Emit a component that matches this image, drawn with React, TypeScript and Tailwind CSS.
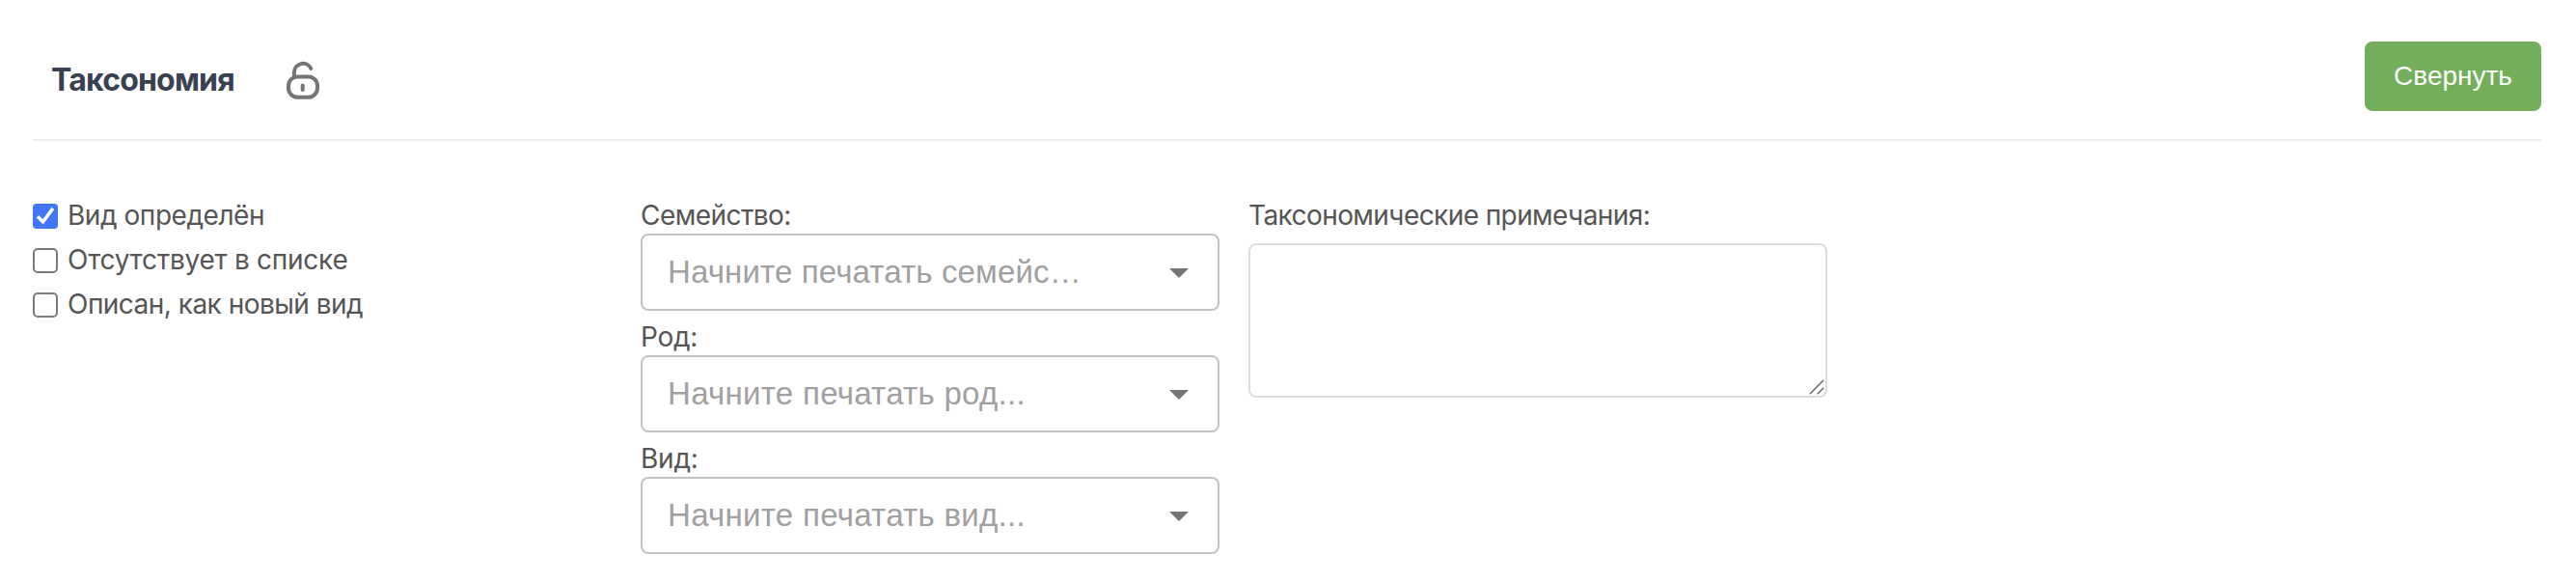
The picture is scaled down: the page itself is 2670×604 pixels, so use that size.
type CheckRowProps = { label: string; checked?: boolean; tracking: string };

function CheckRow({ label, checked = false, tracking }: CheckRowProps) {
  return (
    <label className="flex h-[46px] items-start gap-[10px]">
      {checked ? (
        <span className="mt-[11px] size-[26px] shrink-0 rounded-[4px] bg-[#4175fa]">
          <svg viewBox="0 0 26 26" className="size-[26px]" fill="none" stroke="#fff" strokeWidth="3.6">
            <path d="M5 13.2L10.5 18.8L20.8 5" />
          </svg>
        </span>
      ) : (
        <span className="mt-[11px] size-[26px] shrink-0 rounded-[5px] border-2 border-[#7a7a7a] bg-white" />
      )}
      <span className={`whitespace-nowrap text-[28px] leading-[46px] ${tracking}`}>{label}</span>
    </label>
  );
}

type SelectFieldProps = { label: string; placeholder: string; tracking: string; hintTracking: string };

function SelectField({ label, placeholder, tracking, hintTracking }: SelectFieldProps) {
  return (
    <div className="flex flex-col">
      <span className={`text-[28px] leading-[38px] ${tracking}`}>{label}</span>
      <div className="flex h-20 items-center justify-between rounded-[8px] border-2 border-[#c2c2c2] pr-[30px] pl-[26px]">
        <span className={`whitespace-nowrap font-['Liberation_Sans',sans-serif] text-[33px] leading-[76px] text-[#a0a0a0] ${hintTracking}`}>
          {placeholder}
        </span>
        <svg viewBox="0 0 20 10" className="mt-[2px] h-[10px] w-5 shrink-0" fill="#757575">
          <path d="M0 0H20L10 10Z" />
        </svg>
      </div>
    </div>
  );
}

function UnlockIcon() {
  return (
    <svg viewBox="0 0 36 42" className="h-[42px] w-9" fill="none" stroke="#757575" strokeWidth="4" strokeLinecap="round">
      <rect x="3" y="17.4" width="30" height="21.4" rx="9.5" />
      <path d="M8.9 17.6V12.9A9.2 9.2 0 0 1 26.3 8.9" />
      <path d="M17.7 26.6V31" />
    </svg>
  );
}

export default function App() {
  return (
    <main className="h-[604px] w-[2670px] overflow-hidden bg-white pr-9 pl-[34px] font-[Inter,sans-serif] text-[#555]">
      <header className="flex h-[146px] items-start justify-between border-b-2 border-[#eee] pt-[43px]">
        <div className="flex items-start pl-[19px]">
          <h2 className="mt-5 w-[243px] text-[32px] leading-[40px] font-bold tracking-[-0.8px] text-[#374151]">Таксономия</h2>
          <span className="mt-[19px]">
            <UnlockIcon />
          </span>
        </div>
        <button className="h-[72px] w-[183px] rounded-[8px] bg-[#73ae5b] font-['Liberation_Sans',sans-serif] text-[28px] text-white">
          Свернуть
        </button>
      </header>

      <section className="grid grid-cols-[600px_600px_600px] gap-[30px] pt-[54px]">
        <div className="flex flex-col">
          <CheckRow label="Вид определён" tracking="tracking-[-0.45px]" checked />
          <CheckRow label="Отсутствует в списке" tracking="tracking-[-0.25px]" />
          <CheckRow label="Описан, как новый вид" tracking="tracking-[-0.52px]" />
        </div>

        <div className="flex flex-col gap-2 pt-1">
          <SelectField label="Семейство:" placeholder="Начните печатать семейс…" tracking="tracking-[-0.55px]" hintTracking="tracking-[0.15px]" />
          <SelectField label="Род:" placeholder="Начните печатать род..." tracking="tracking-[-0.3px]" hintTracking="tracking-[0.3px]" />
          <SelectField label="Вид:" placeholder="Начните печатать вид..." tracking="tracking-[-0.2px]" hintTracking="tracking-[0.3px]" />
        </div>

        <div className="flex flex-col gap-[10px] pt-1">
          <span className="text-[28px] leading-[38px] tracking-[-0.58px]">Таксономические примечания:</span>
          <div className="flex h-40 items-end justify-end rounded-[8px] border-2 border-[#dcdcdc]">
            <svg viewBox="0 0 18 18" className="size-[18px]" fill="none" stroke="#666" strokeWidth="1.5">
              <path d="M1.8 16.2L16.2 1.8M9.8 16.2L16.2 9.8" />
            </svg>
          </div>
        </div>
      </section>
    </main>
  );
}
